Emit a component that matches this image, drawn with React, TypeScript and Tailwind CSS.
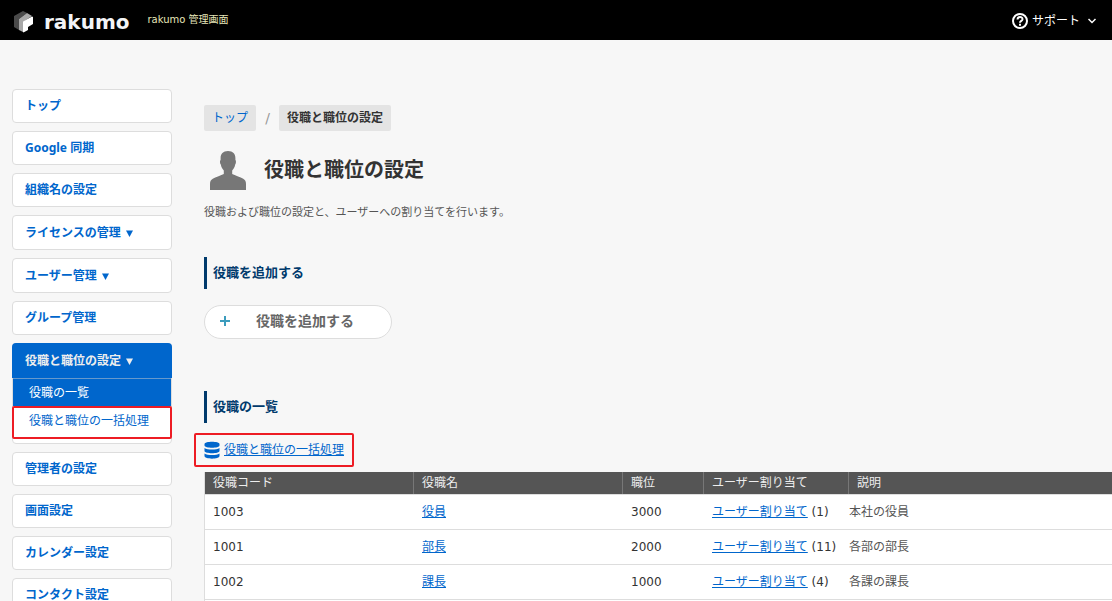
import React from 'react';

interface Role {
  code: string;
  name: string;
  rank: number;
  userCount: number;
  description: string;
}

interface MenuItem {
  label: string;
  expandable?: boolean;
  children?: string[];
}

const MENU_ITEMS: MenuItem[] = [
  { label: 'トップ' },
  { label: 'Google 同期' },
  { label: '組織名の設定' },
  { label: 'ライセンスの管理', expandable: true },
  { label: 'ユーザー管理', expandable: true },
  { label: 'グループ管理' },
  { label: '役職と職位の設定', expandable: true, children: ['役職の一覧', '役職と職位の一括処理'] },
  { label: '管理者の設定' },
  { label: '画面設定' },
  { label: 'カレンダー設定' },
  { label: 'コンタクト設定' },
];

const ROLES: Role[] = [
  { code: '1003', name: '役員', rank: 3000, userCount: 1, description: '本社の役員' },
  { code: '1001', name: '部長', rank: 2000, userCount: 11, description: '各部の部長' },
  { code: '1002', name: '課長', rank: 1000, userCount: 4, description: '各課の課長' },
];

const LogoMark: React.FC = () => (
  <svg width="19" height="22" viewBox="0 0 19 22" aria-hidden="true">
    <path d="M0 5 9 0l4 2-8 6v11l-5-3z" fill="#4a4a4a" />
    <path d="M5 8l8-6 5 3-9 6v10l-4-2z" fill="#a8a8a8" />
    <path d="M9 10.500 18 5.500l1 .5v7l-5 3v3l-4.500 2.500-.5-.5z" fill="#fff" />
  </svg>
);

const HelpIcon: React.FC = () => (
  <svg width="16" height="16" viewBox="0 0 16 16" fill="none" stroke="#fff" strokeWidth="2" aria-hidden="true">
    <circle cx="8" cy="8" r="7" />
    <path d="M5.5 6.5C5.5 3.3 10.5 3.3 10.5 6.2 10.5 8 8 7.8 8 9.8" />
    <path d="M8 10.8v2" />
  </svg>
);

const PersonIcon: React.FC = () => (
  <svg width="36" height="39" viewBox="0 0 36 39" fill="#777" aria-hidden="true">
    <path d="M18 0c5 0 7.400 3 7.400 7v2c.8.3.8 3.500-.2 4.500-.5 3-1.700 4.500-3 6v3.500c4 1.500 8 3.300 11 4.700 2 1 2.800 2.800 2.800 5.300v6H0v-6c0-2.500.8-4.300 2.800-5.300 3-1.400 7-3.200 11-4.700v-3.500c-1.300-1.500-2.500-3-3-6-1-1-1-4.200-.2-4.500V7c0-4 2.400-7 7.400-7z" />
  </svg>
);

const DatabaseIcon: React.FC = () => (
  <svg width="16" height="18" viewBox="0 0 16 18" fill="#0066cc" aria-hidden="true">
    <path d="M.5 3C.5 0 15.500 0 15.500 3v1.500c0 3-15 3-15 0z" />
    <path d="M.5 7c3 2 12 2 15 0v3c0 3-15 3-15 0z" />
    <path d="M.5 12.500c3 2 12 2 15 0v2.500c0 3.500-15 3.500-15 0z" />
  </svg>
);

const Header: React.FC = () => (
  <header className="flex h-10 items-center justify-between bg-black pl-3.5 pr-4 text-white">
    <div className="flex items-center">
      <a href="#" className="flex items-center gap-[11px] pt-[3px]">
        <LogoMark />
        <span className="text-[20px] leading-6 font-bold text-gray-100">rakumo</span>
      </a>
      <span className="ml-[18px] text-[10px] leading-4 text-[#e6e6b8]">rakumo 管理画面</span>
    </div>
    <button type="button" className="flex items-center gap-1 pt-0.5 text-[12px]">
      <HelpIcon />
      <span>サポート</span>
      <svg width="8" height="6" viewBox="0 0 8 6" fill="none" stroke="#fff" strokeWidth="1.500" className="ml-1" aria-hidden="true">
        <path d="M.5 1 4 4.500 7.500 1" />
      </svg>
    </button>
  </header>
);

const DownTriangle: React.FC = () => (
  <svg width="7" height="8" viewBox="0 0 7 8" fill="currentColor" className="ml-[5px]" aria-hidden="true">
    <path d="M0 1.500h7L3.500 8z" />
  </svg>
);

const SideMenu: React.FC = () => (
  <nav className="w-40 shrink-0">
    <ul className="flex flex-col gap-2">
      {MENU_ITEMS.map(({ label, expandable, children }) =>
        children ? (
          <li key={label} className="rounded border border-[#ddd] bg-white pb-2">
            <a href="#" className="-mx-px -mt-px flex h-[35px] items-center rounded-t bg-[#0066cc] px-[13px] font-bold text-[#eee]">
              {label}
              <DownTriangle />
            </a>
            <a href="#" className="flex h-7 items-center border-t border-[#6699cc] bg-[#0066cc] px-4 text-white">
              {children[0]}
            </a>
            <a href="#" className="relative flex h-[29px] items-center px-4 text-[#0066cc]">
              {children[1]}
              <span className="absolute -inset-x-px top-0 -bottom-1 rounded-xs border-2 border-[#ed1c24]" />
            </a>
          </li>
        ) : (
          <li key={label} className="rounded border border-[#ddd] bg-white">
            <a
              href="#"
              className={`flex items-center px-3 font-['Noto_Sans','Noto_Sans_CJK_JP',sans-serif] font-bold text-[#0066cc] ${expandable ? 'h-[33px]' : 'h-8'}`}
            >
              {label}
              {expandable && <DownTriangle />}
            </a>
          </li>
        ),
      )}
    </ul>
  </nav>
);

const SectionTitle: React.FC<{ children: React.ReactNode }> = ({ children }) => (
  <h2 className="flex h-8 items-center border-l-[3px] border-[#003a6c] pl-1.5 text-[13px] font-bold text-[#003a6c]">
    {children}
  </h2>
);

const RoleTable: React.FC = () => (
  <table className="w-full table-fixed border-separate border-spacing-0 border-l border-[#ddd] text-left">
    <colgroup>
      <col className="w-[209px]" />
      <col className="w-[209px]" />
      <col className="w-[81px]" />
      <col className="w-[145px]" />
      <col />
    </colgroup>
    <thead>
      <tr className="h-[22px] bg-[#555] text-[#eee]">
        <th className="border-r border-[#777] px-2 font-normal">役職コード</th>
        <th className="border-r border-[#777] px-2 font-normal">役職名</th>
        <th className="border-r border-[#777] px-2 font-normal">職位</th>
        <th className="border-r border-[#777] px-2 font-normal">ユーザー割り当て</th>
        <th className="px-2 font-normal">説明</th>
      </tr>
    </thead>
    <tbody>
      {ROLES.map((role) => (
        <tr key={role.code} className="h-[35px] bg-white">
          <td className="border-t border-[#ddd] px-2">{role.code}</td>
          <td className="border-t border-[#ddd] px-2">
            <a href="#" className="text-[#0066cc] underline">{role.name}</a>
          </td>
          <td className="border-t border-[#ddd] px-2">{role.rank}</td>
          <td className="border-t border-[#ddd] pl-2 whitespace-nowrap">
            <a href="#" className="text-[#0066cc] underline">ユーザー割り当て</a> ({role.userCount})
          </td>
          <td className="border-t border-[#ddd] text-[#555]">{role.description}</td>
        </tr>
      ))}
      <tr>
        <td colSpan={5} className="h-0.5 border-t border-[#ddd] bg-white p-0" />
      </tr>
    </tbody>
  </table>
);

const App: React.FC = () => {
  return (
    <div className="h-screen overflow-hidden bg-[#f7f7f7] font-['DejaVu_Sans','Noto_Sans_CJK_JP',sans-serif] text-[12px] leading-4 text-[#333]">
      <Header />
      <div className="flex gap-8 pt-[49px] pl-3">
        <SideMenu />
        <main className="min-w-0 flex-1 pt-4">
          <nav className="flex h-[26px] items-stretch">
            <a href="#" className="flex items-center rounded-xs bg-[#e4e4e4] px-2 text-[#0066cc]">トップ</a>
            <span className="flex w-[23px] items-center justify-center text-[14px] text-[#999]">/</span>
            <span className="flex items-center rounded-xs bg-[#e4e4e4] px-2 font-bold">役職と職位の設定</span>
          </nav>

          <div className="mt-5 flex items-center gap-[18px] pl-1.5">
            <PersonIcon />
            <h1 className="pb-0.5 text-[20px] leading-8 font-bold">役職と職位の設定</h1>
          </div>
          <p className="mt-[15px] mb-9 text-[11px] text-[#555]">
            役職および職位の設定と、ユーザーへの割り当てを行います。
          </p>

          <SectionTitle>役職を追加する</SectionTitle>
          <button
            type="button"
            className="mt-4 mb-[52px] flex h-[34px] w-[188px] items-center gap-[26px] rounded-full border border-[#ddd] bg-white pb-0.5 pl-[15px] text-[14px] font-bold text-[#666]"
          >
            <svg width="10" height="10" viewBox="0 0 10 10" stroke="#3c9cbd" strokeWidth="2" aria-hidden="true">
              <path d="M5 0v10M0 5h10" />
            </svg>
            役職を追加する
          </button>

          <SectionTitle>役職の一覧</SectionTitle>
          <div className="relative mt-[18px] mb-[13px] flex w-fit items-center gap-1">
            <DatabaseIcon />
            <a href="#" className="text-[#0066cc] underline">役職と職位の一括処理</a>
            <span className="pointer-events-none absolute -inset-x-2.5 -inset-y-2 rounded-xs border-2 border-[#ed1c24]" />
          </div>

          <RoleTable />
        </main>
      </div>
    </div>
  );
};

export default App;
